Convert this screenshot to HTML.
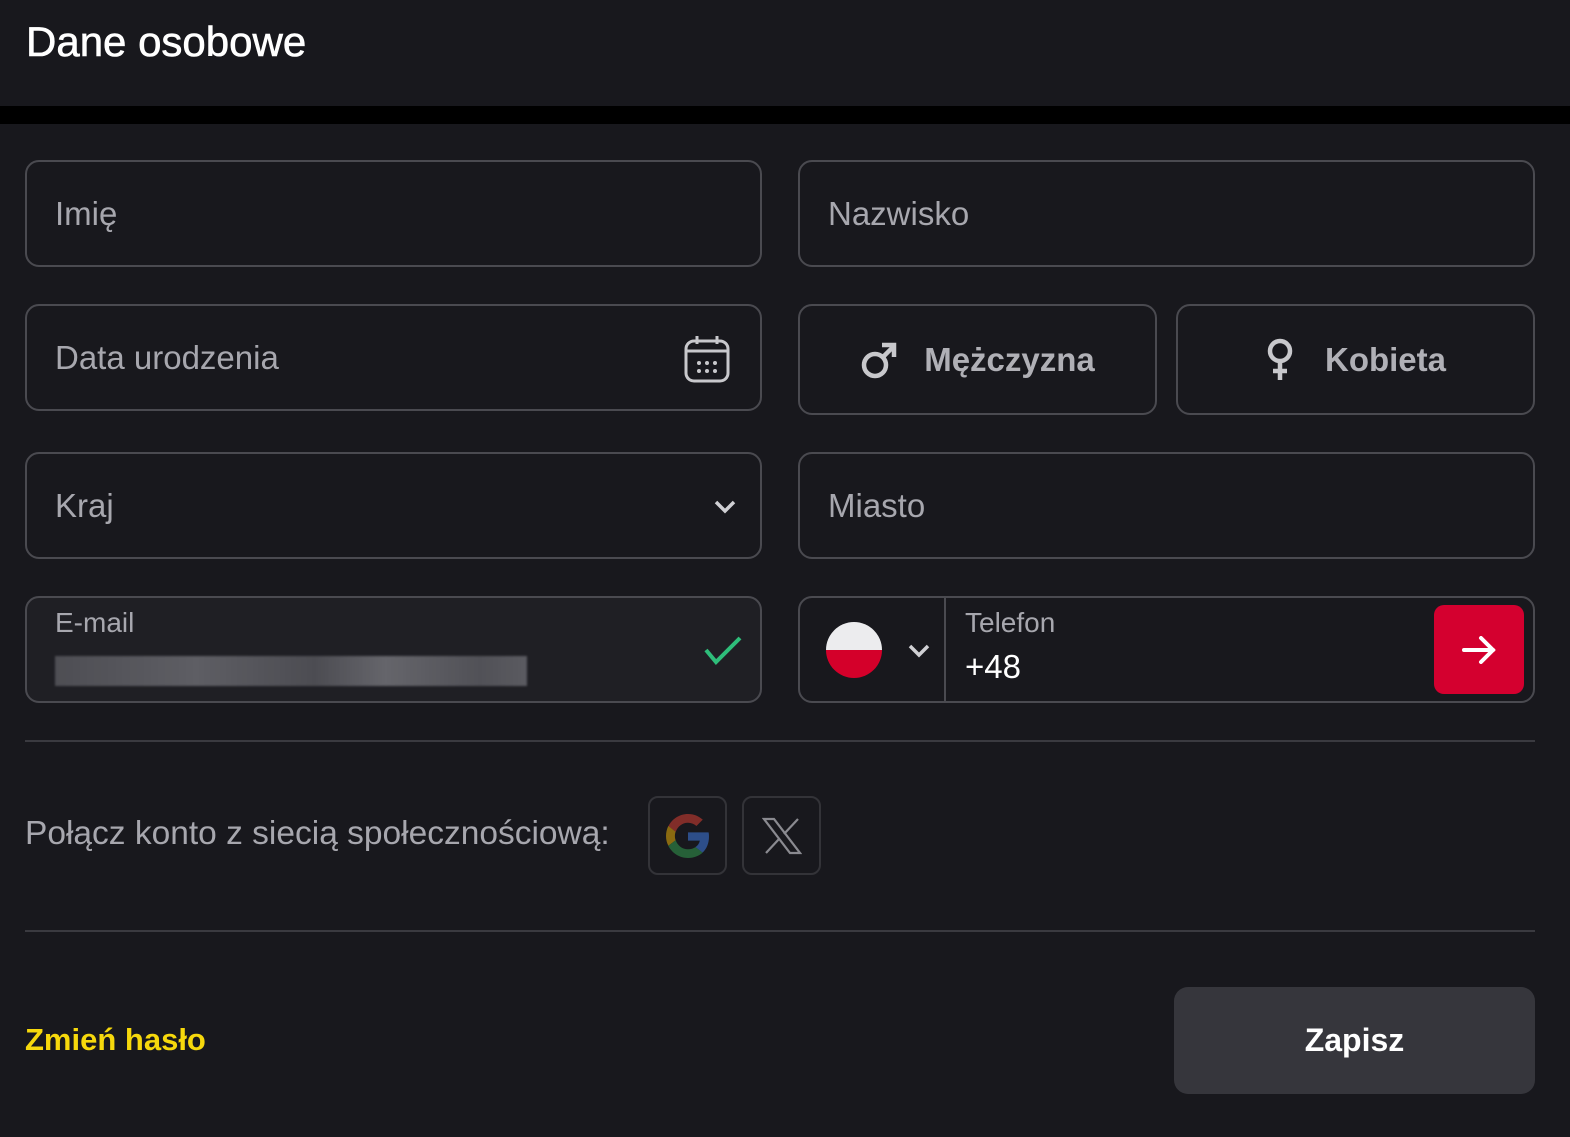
<!DOCTYPE html>
<html><head><meta charset="utf-8"><style>
*{box-sizing:border-box;margin:0;padding:0}
body{width:1570px;height:1137px;background:#18181d;font-family:"Liberation Sans",sans-serif;position:relative;overflow:hidden;color:#a7a7ae}
.hdr{position:absolute;left:0;top:0;width:1570px;height:106px;background:#18181d}
.hdr h1{position:absolute;left:26px;top:18px;font-size:42px;font-weight:normal;color:#fff;-webkit-text-stroke:0.6px #fff}
.band{position:absolute;left:0;top:106px;width:1570px;height:18px;background:#000}
.f{position:absolute;border:2px solid #4a4a50;border-radius:14px;height:107px}
.ph{position:absolute;left:28px;top:50%;transform:translateY(-50%);font-size:33px;color:#a7a7ae}
.L{left:25px;width:737px}.R{left:798px;width:737px}
.g{position:absolute;top:304px;height:111px;width:359px;border:2px solid #4a4a50;border-radius:14px;display:flex;align-items:center;justify-content:center;font-size:33px;font-weight:bold;color:#b0b0b6}
.hr{position:absolute;left:25px;width:1510px;height:2px;background:#3a3a40}
.sb{position:absolute;top:796px;width:79px;height:79px;border:2px solid #333338;border-radius:10px;display:flex;align-items:center;justify-content:center}
</style></head><body>
<div class="hdr"><h1>Dane osobowe</h1></div>
<div class="band"></div>

<div class="f L" style="top:160px"><span class="ph">Imię</span></div>
<div class="f R" style="top:160px"><span class="ph">Nazwisko</span></div>

<div class="f L" style="top:304px"><span class="ph">Data urodzenia</span>
<svg style="position:absolute;right:30px;top:28px" width="46" height="50" viewBox="0 0 46 50" fill="none" stroke="#c8c8cc" stroke-width="3"><rect x="2" y="7" width="42" height="40" rx="8"/><line x1="2" y1="17" x2="44" y2="17"/><line x1="13" y1="2" x2="13" y2="10"/><line x1="33" y1="2" x2="33" y2="10"/><g fill="#c8c8cc" stroke="none"><circle cx="15" cy="29" r="2"/><circle cx="23" cy="29" r="2"/><circle cx="31" cy="29" r="2"/><circle cx="15" cy="37" r="2"/><circle cx="23" cy="37" r="2"/><circle cx="31" cy="37" r="2"/></g></svg></div>

<div class="g" style="left:798px"><svg width="38" height="40" viewBox="0 0 38 40" fill="none" stroke="#c8c8cc" stroke-width="4.5" style="margin-right:26px"><circle cx="15" cy="25" r="11"/><line x1="23" y1="17" x2="34" y2="6"/><polyline points="22,5 34,5 34,17"/></svg>Mężczyzna</div>
<div class="g" style="left:1176px"><svg width="30" height="44" viewBox="0 0 30 44" fill="none" stroke="#c8c8cc" stroke-width="4.5" style="margin-right:30px"><circle cx="15" cy="13" r="10"/><line x1="15" y1="23" x2="15" y2="42"/><line x1="8" y1="33" x2="22" y2="33"/></svg>Kobieta</div>

<div class="f L" style="top:452px"><span class="ph">Kraj</span>
<svg style="position:absolute;right:24px;top:46px" width="22" height="14" viewBox="0 0 22 14" fill="none" stroke="#d0d0d4" stroke-width="3.5"><polyline points="2,2 11,11 20,2"/></svg></div>
<div class="f R" style="top:452px"><span class="ph">Miasto</span></div>

<div class="f L" style="top:596px;background:#1f1f24">
<span style="position:absolute;left:28px;top:9px;font-size:28px;color:#a7a7ae">E-mail</span>
<div style="position:absolute;left:28px;top:58px;width:472px;height:30px;background:linear-gradient(90deg,#5a5a60,#6e6e74 30%,#58585e 55%,#77777d 70%,#5e5e64 90%,#6a6a70);opacity:.8;filter:blur(1px)"></div>
<svg style="position:absolute;right:18px;top:38px" width="38" height="30" viewBox="0 0 38 30" fill="none" stroke="#2ebd7a" stroke-width="4"><polyline points="2,14 12,26 36,2"/></svg></div>

<div class="f R" style="top:596px">
<div style="position:absolute;left:26px;top:24px;width:56px;height:56px;border-radius:50%;overflow:hidden"><div style="height:50%;background:#ececee"></div><div style="height:50%;background:#d4002a"></div></div>
<svg style="position:absolute;left:108px;top:46px" width="22" height="14" viewBox="0 0 22 14" fill="none" stroke="#d0d0d4" stroke-width="3.5"><polyline points="2,2 11,11 20,2"/></svg>
<div style="position:absolute;left:144px;top:0;width:2px;height:103px;background:#4a4a50"></div>
<span style="position:absolute;left:165px;top:9px;font-size:28px;color:#a7a7ae">Telefon</span>
<span style="position:absolute;left:165px;top:50px;font-size:33px;color:#fff">+48</span>
<div style="position:absolute;right:9px;top:7px;width:90px;height:89px;background:#d4002f;border-radius:10px;display:flex;align-items:center;justify-content:center"><svg width="34" height="28" viewBox="0 0 34 28" fill="none" stroke="#fff" stroke-width="4" stroke-linecap="round"><line x1="2" y1="14" x2="31" y2="14"/><polyline points="19,2 31,14 19,26"/></svg></div>
</div>

<div class="hr" style="top:740px"></div>
<div style="position:absolute;left:25px;top:815px;font-size:33.5px;color:#a7a7ae">Połącz konto z siecią społecznościową:</div>
<div class="sb" style="left:648px"><svg width="44" height="44" viewBox="0 0 48 48" opacity=".5"><path fill="#EA4335" d="M24 9.5c3.5 0 6.7 1.2 9.2 3.6l6.9-6.9C35.9 2.4 30.5 0 24 0 14.6 0 6.6 5.4 2.6 13.3l8 6.2C12.5 13.7 17.8 9.5 24 9.5z"/><path fill="#4285F4" d="M46.9 24.5c0-1.6-.1-3.1-.4-4.5H24v9h12.9c-.6 3-2.3 5.5-4.8 7.2l7.7 6c4.5-4.2 7.1-10.3 7.1-17.7z"/><path fill="#FBBC05" d="M10.5 28.7c-.5-1.4-.8-3-.8-4.700s.3-3.2.8-4.7l-8-6.2C.9 16.5 0 20.1 0 24s.9 7.5 2.6 10.7l7.9-6z"/><path fill="#34A853" d="M24 48c6.5 0 11.9-2.1 15.9-5.8l-7.7-6c-2.2 1.5-5 2.3-8.2 2.3-6.2 0-11.5-4.2-13.4-9.9l-8 6.2C6.6 42.6 14.6 48 24 48z"/></svg></div>
<div class="sb" style="left:742px"><svg width="40" height="38" viewBox="0 0 40 38" fill="none" stroke="#8a8a90" stroke-width="2.2"><path d="M2 2h10l26 34H28z"/><line x1="36" y1="2" x2="22" y2="17"/><line x1="4" y1="36" x2="17" y2="22"/></svg></div>

<div class="hr" style="top:930px"></div>
<div style="position:absolute;left:25px;top:1022px;font-size:31px;font-weight:bold;color:#f6d80c">Zmień hasło</div>
<div style="position:absolute;left:1174px;top:987px;width:361px;height:107px;background:#36363c;border-radius:14px;display:flex;align-items:center;justify-content:center;font-size:32px;font-weight:bold;color:#fff">Zapisz</div>
</body></html>
